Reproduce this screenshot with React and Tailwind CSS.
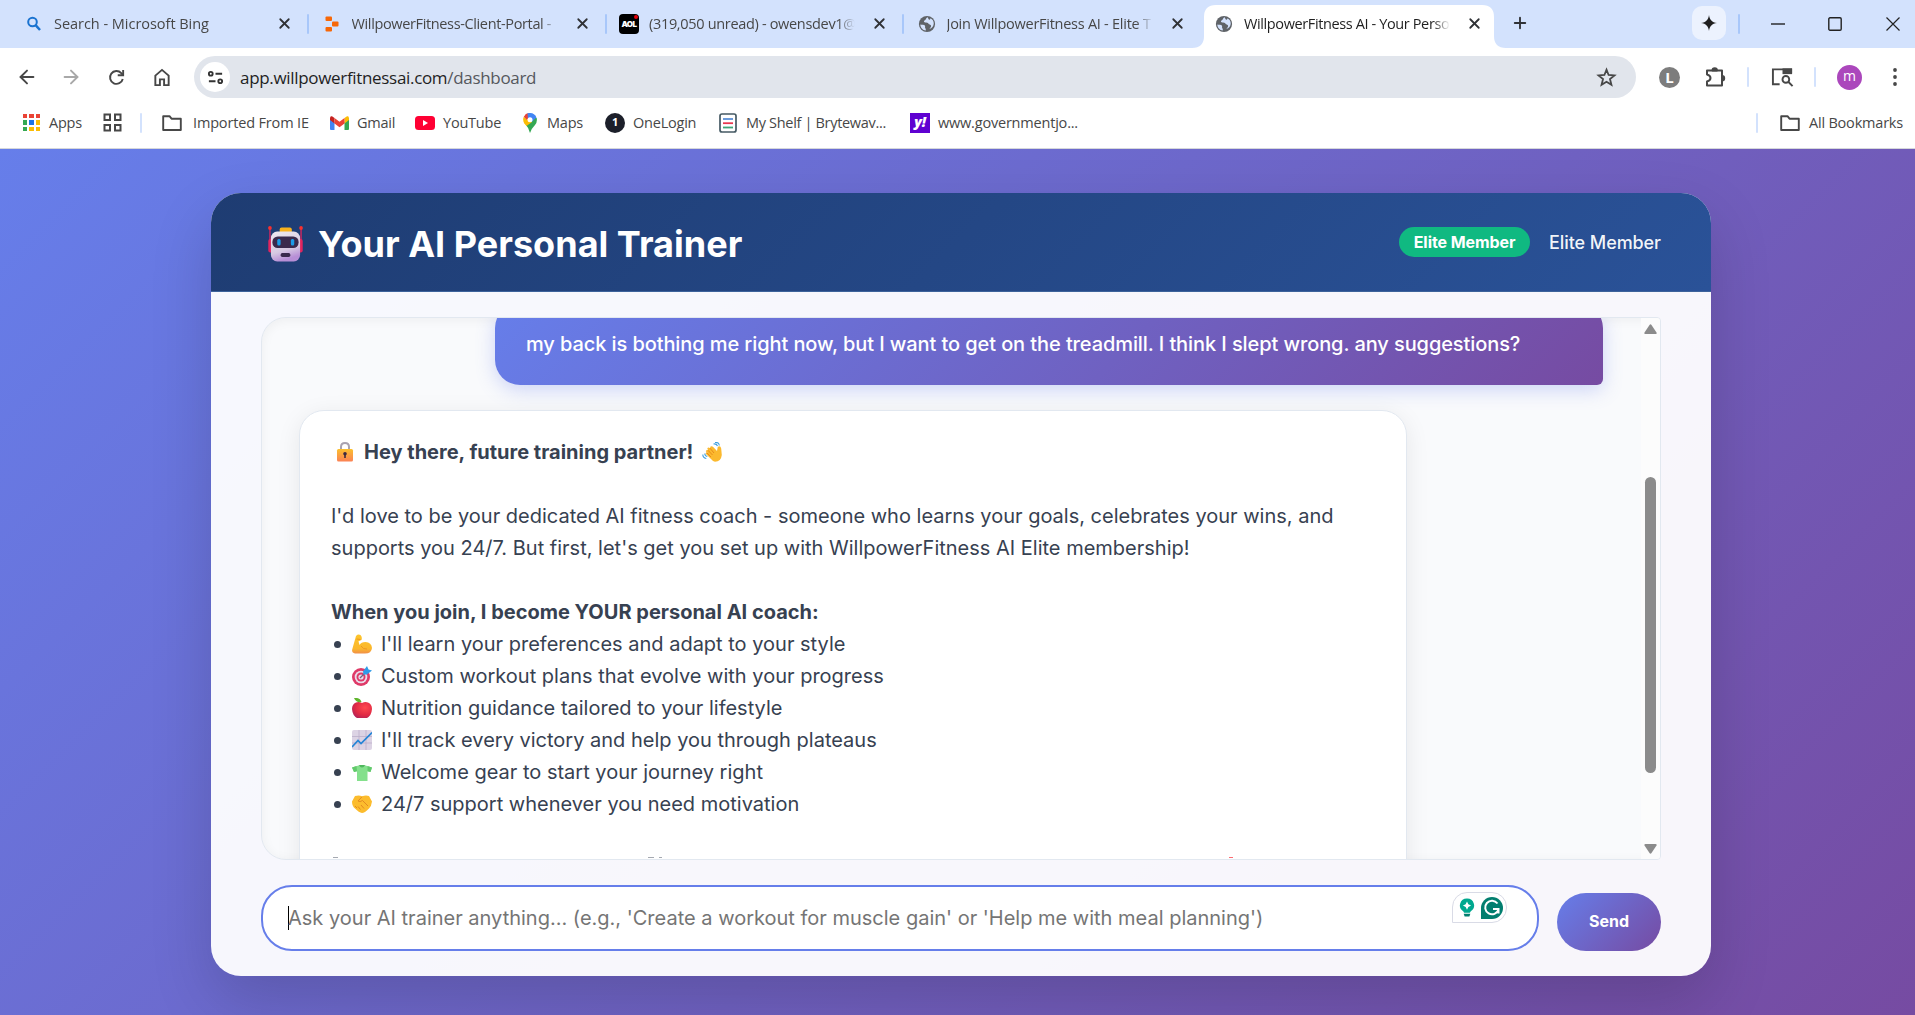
import React from "react";
import { ArrowLeft, ArrowRight, X, Plus } from "lucide-react";

const UI = "font-['Open_Sans',sans-serif]";

function Globe() {
  return (
    <svg viewBox="0 0 20 20" className="h-[18px] w-[18px] shrink-0">
      <circle cx="10" cy="10" r="9" fill="#5f6368" />
      <path d="M10.5 2.6c-2 1-1.2 2.6-2.8 3.2-1.500.6-1.600 2 .2 2.500 1.600.3 3.200-.2 3.800 1.300.4 1.300 2.500.6 2.800 2 .3 1.500-.8 2.700-2 4 3-1 5-3.300 5-6.200 0-2.600-1.400-4.600-3.600-5.700-.1 1.300-1 1.800-1.800 1.200-.8-.5-.6-1.500-1.600-2.300z" fill="#d3e2fd" />
      <path d="M2.600 10.500c1.700.3 4.200.2 5 1.300.8 1.200-.3 2 .7 3.200.7.800.2 1.700.4 2.300-3.500-.6-6-3.300-6.100-6.800z" fill="#d3e2fd" />
    </svg>
  );
}

function BingIcon() {
  return (
    <svg viewBox="0 0 16 16" className="h-4 w-4 shrink-0" fill="none" stroke="#1a73d0" strokeWidth="2">
      <circle cx="6.500" cy="6" r="4.300" />
      <path d="M9.600 9.200 14 14" strokeWidth="2.500" />
    </svg>
  );
}

function ReplitIcon() {
  return (
    <svg viewBox="0 0 14 16" className="h-4 w-[14px] shrink-0" fill="#f76707">
      <rect x="0.500" y="0.500" width="6.500" height="4.500" rx="1" />
      <rect x="7" y="5.500" width="6.500" height="5" rx="1" />
      <rect x="0.500" y="11" width="6.500" height="4.500" rx="1" />
    </svg>
  );
}

function AolIcon() {
  return (
    <span className="relative flex h-5 w-5 shrink-0 items-center justify-center rounded bg-black font-['Inter',sans-serif] text-[8px] font-black tracking-[-0.5px] text-white">
      AOL
      <span className="absolute right-px top-px h-1 w-1 rounded-full bg-red-600" />
    </span>
  );
}

function Tab({ icon, title, titleClass, active, sep }) {
  return (
    <div className={"relative flex h-[43px] w-[297.5px] shrink-0 items-center pb-[6px] " + (active ? "text-[#1f1f1f]" : "text-[#474747]")}>
      {active && (
        <svg viewBox="0 0 315 43" className="absolute -left-[12px] top-0 h-[43px] w-[315px]">
          <path d="M0 43 Q12 43 12 31 V12 Q12 0 24 0 H290 Q302 0 302 12 V31 Q302 43 314 43 Z" fill="#fff" />
        </svg>
      )}
      <div className="relative flex w-10 shrink-0 items-center justify-center">{icon}</div>
      <div className={"relative w-[210px] overflow-hidden whitespace-nowrap leading-5 [mask-image:linear-gradient(to_right,black_90%,transparent_98%)] " + UI + " " + titleClass}>{title}</div>
      <X className="relative ml-[12px] h-[17px] w-[17px] shrink-0 text-[#303236]" strokeWidth={2.500} />
      {sep && <Sep className="relative ml-[14px]" />}
    </div>
  );
}

const Sep = ({ className = "bg-[#a8c7fa]" }) => <span className={"h-5 w-[2px] shrink-0 rounded " + (className.includes("bg-") ? "" : "bg-[#a8c7fa] ") + className} />;

function Folder() {
  return (
    <svg viewBox="0 0 20 18" className="h-[18px] w-5 shrink-0" fill="none" stroke="#474747" strokeWidth="1.900" strokeLinejoin="round">
      <path d="M1.200 2.200H7.500L9.500 4.700H18.800V16H1.200Z" />
    </svg>
  );
}

function AppsIcon() {
  const c = ["#ea4335", "#ea4335", "#ea4335", "#34a853", "#1a73e8", "#fbbc04", "#34a853", "#fbbc04", "#fbbc04"];
  return (
    <div className="grid h-[17px] w-[17px] shrink-0 grid-cols-3 gap-[2px]">
      {c.map((v, i) => (
        <span key={i} style={{ backgroundColor: v }} />
      ))}
    </div>
  );
}

function TabStrip() {
  return (
    <div className="flex h-12 w-full items-start bg-[#d3e2fd] pt-[5px]">
      <div className="flex w-[1204px] shrink-0 pl-[14px]">
        <Tab sep icon={<BingIcon />} title="Search - Microsoft Bing" titleClass="text-[14.500px] tracking-[-0.030px]" />
        <Tab sep icon={<ReplitIcon />} title="WillpowerFitness-Client-Portal -" titleClass="text-[14.500px] tracking-[-0.360px]" />
        <Tab sep icon={<AolIcon />} title="(319,050 unread) - owensdev1@" titleClass="text-[14.500px] tracking-[-0.320px]" />
        <Tab icon={<Globe />} title="Join WillpowerFitness AI - Elite T" titleClass="text-[14.500px] tracking-[-0.260px]" />
      </div>
      <div className="w-[290px] shrink-0">
        <Tab active icon={<Globe />} title="WillpowerFitness AI - Your Perso" titleClass="text-[14.500px] tracking-[-0.380px]" />
      </div>
      <div className="flex h-[38px] flex-1 items-center">
        <Plus className="ml-[17px] h-[18px] w-[18px] -translate-y-px text-[#303236]" strokeWidth={2.500} />
        <div className="-mt-[2px] ml-auto flex h-[34px] w-[34px] items-center justify-center rounded-[10px] bg-[#ecf2fe]">
          <svg viewBox="0 0 16 16" className="h-[16px] w-[16px]" fill="#1f1f1f">
            <path d="M8 0C8.700 5 11 7.300 16 8 11 8.700 8.700 11 8 16 7.300 11 5 8.700 0 8 5 7.300 7.300 5 8 0Z" />
          </svg>
        </div>
        <Sep className="ml-3" />
        <svg viewBox="0 0 14 14" className="ml-[31px] h-[14px] w-[14px]" stroke="#111" strokeWidth="1.300"><path d="M0 7H14" /></svg>
        <svg viewBox="0 0 14 14" className="ml-[43px] h-[14px] w-[14px]" fill="none" stroke="#222" strokeWidth="1.400"><rect x=".8" y=".8" width="12.400" height="12.400" rx="1.200" /></svg>
        <svg viewBox="0 0 14 14" className="ml-[44px] mr-[15px] h-[14px] w-[14px]" stroke="#222" strokeWidth="1.200"><path d="M.5 .5 13.500 13.500M13.500 .5 .5 13.500" /></svg>
      </div>
    </div>
  );
}

function Toolbar() {
  return (
    <div className="flex h-14 items-center bg-white pt-[2px] text-[#474747]">
      <div className="flex w-[194px] shrink-0 items-center pl-4">
        <ArrowLeft className="h-[22px] w-[22px]" strokeWidth={2.100} />
        <ArrowRight className="ml-[22px] h-[22px] w-[22px] text-[#a8a8a8]" strokeWidth={2.100} />
        <svg viewBox="0 0 20 20" className="ml-[25px] h-[19px] w-[19px]" fill="none" stroke="#474747" strokeWidth="2">
          <path d="M16.600 11.500A6.800 6.800 0 1 1 15 5.300L16.500 7" />
          <path d="M17 2V7.700H11.300" />
        </svg>
        <svg viewBox="0 0 18 20" className="ml-[27px] h-[19px] w-[18px]" fill="none" stroke="#474747" strokeWidth="2">
          <path d="M2 8 9 2 16 8V18H11.200V12H6.800V18H2Z" />
        </svg>
      </div>
      <div className="flex h-[42px] w-[1442px] shrink-0 items-center rounded-full bg-[#e1e5ec] pl-[6px] pr-[19px]">
        <span className="flex h-[30px] w-[30px] items-center justify-center rounded-full bg-white">
          <svg viewBox="0 0 18 18" className="h-[17px] w-[17px]" fill="none" stroke="#333" strokeWidth="2">
            <circle cx="4" cy="5" r="2" /><path d="M9 5H16M2 13H9" /><circle cx="14" cy="13" r="2" />
          </svg>
        </span>
        <span className={"ml-[10px] pt-px text-[17px] tracking-[-0.320px] text-[#1f1f1f] " + UI}>
          app.willpowerfitnessai.com<span className="text-[#55585d]">/dashboard</span>
        </span>
        <svg viewBox="0 0 20 20" className="ml-auto h-[21px] w-[21px]" fill="none" stroke="#474747" strokeWidth="1.700">
          <path d="M10 2.500 12 7.600 17.600 8 13.300 11.500 14.700 17 10 14 5.300 17 6.700 11.500 2.400 8 8 7.600Z" />
        </svg>
      </div>
      <div className="flex flex-1 items-center">
        <span className={"ml-[23px] flex h-[21px] w-[21px] items-center justify-center rounded-full bg-[#7d7d7d] text-[15px] font-bold leading-none text-white " + UI}>L</span>
        <svg viewBox="0 0 22 22" className="ml-[25px] h-[22px] w-[22px]" fill="none" stroke="#474747" strokeWidth="2" strokeLinejoin="round">
          <path d="M2 4.500H17V19.500H2V15.500Q5.500 14.500 5.500 12T2 8.500Z" />
          <path d="M7.500 4.500a2.200 2.200 0 0 1 4.400 0ZM17 10a2.200 2.200 0 0 1 0 4.400Z" fill="#474747" />
        </svg>
        <Sep className="ml-[20px] bg-[#d3e2fd]" />
        <svg viewBox="0 0 24 20" className="ml-[22px] h-[20px] w-[23px]" fill="none" stroke="#474747" strokeWidth="2">
          <path d="M9 17.500H2V2H21V6" /><path d="M12 1H22V7H12Z" fill="#474747" stroke="none" />
          <circle cx="15.500" cy="12.500" r="3.500" /><path d="M18 15 22.500 19.500" />
        </svg>
        <Sep className="ml-[20px] bg-[#d3e2fd]" />
        <span className={"ml-[21px] flex h-[25px] w-[25px] items-center justify-center rounded-full bg-[#ab47bc] pb-[2px] text-[14px] leading-none text-white " + UI}>m</span>
        <svg viewBox="0 0 4 18" className="ml-[31px] h-[18px] w-[4px]" fill="#474747">
          <circle cx="2" cy="2" r="1.900" /><circle cx="2" cy="9" r="1.900" /><circle cx="2" cy="16" r="1.900" />
        </svg>
      </div>
    </div>
  );
}

function Mark({ icon, label, w, gap, track = "" }) {
  return (
    <div className={"flex shrink-0 items-center " + w}>
      {icon}
      <span className={"whitespace-nowrap " + gap + " " + track}>{label}</span>
    </div>
  );
}

function Bookmarks() {
  return (
    <div className={"flex h-[45px] items-center border-b border-[#d5d7db] bg-white pb-[7px] pl-[23px] pr-3 text-[14.500px] tracking-[-0.220px] text-[#474747] " + UI}>
      <Mark icon={<AppsIcon />} label="Apps" w="w-[80px]" gap="ml-[9px]" />
      <svg viewBox="0 0 19 19" className="h-[19px] w-[19px] shrink-0" fill="none" stroke="#474747" strokeWidth="2">
        <rect x="1.500" y="1.500" width="5.500" height="5.500" /><rect x="12" y="1.500" width="5.500" height="5.500" />
        <rect x="1.500" y="12" width="5.500" height="5.500" /><rect x="12" y="12" width="5.500" height="5.500" />
      </svg>
      <Sep className="ml-[18px] mr-[20px] bg-[#d3e2fd]" />
      <Mark icon={<Folder />} label="Imported From IE" w="w-[168px]" gap="ml-[11px]" track="tracking-[-0.160px]" />
      <Mark
        icon={
          <svg viewBox="0 0 19 14" className="h-[14px] w-[19px] shrink-0">
            <path d="M0 2V13Q0 14 1 14H4.500V6Z" fill="#4285f4" /><path d="M19 2V13Q19 14 18 14H14.500V6Z" fill="#34a853" />
            <path d="M14.500 2 17 .3Q19-.3 19 2.500V4L14.500 7.500Z" fill="#fbbc04" /><path d="M4.500 2 2 .3Q0-.3 0 2.500V4L4.500 7.500Z" fill="#c5221f" />
            <path d="M4.500 2 9.500 5.800 14.500 2V7.500L9.500 11.300 4.500 7.500Z" fill="#ea4335" />
          </svg>
        }
        label="Gmail" w="w-[85px]" gap="ml-[8px]"
      />
      <Mark
        icon={<svg viewBox="0 0 20 14" className="h-[14px] w-5 shrink-0"><rect width="20" height="14" rx="3.500" fill="#f03" /><path d="M8 4V10L13 7Z" fill="#fff" /></svg>}
        label="YouTube" w="w-[108px]" gap="ml-[8px]"
      />
      <Mark
        icon={
          <svg viewBox="0 0 14 20" className="h-5 w-[14px] shrink-0">
            <path d="M7 20Q6 15 2.500 11.500L10 4 13.700 5Q14.500 9 12 12 8 16 7 20Z" fill="#34a853" />
            <path d="M1.500 10.500Q-.8 7 .8 3.700L5 7.500Z" fill="#fbbc04" /><path d="M1 10 6 5 9 9 3.500 13Z" fill="#fbbc04" />
            <path d="M.8 3.700Q2.500.5 5.500.1L6.500 4 4 7Z" fill="#ea4335" /><path d="M4.500.2Q11-1 13.500 4.500L8.500 9 5 6Z" fill="#4285f4" />
            <circle cx="7" cy="6.800" r="2.500" fill="#fff" />
          </svg>
        }
        label="Maps" w="w-[82px]" gap="ml-[10px]"
      />
      <Mark icon={<span className="flex h-5 w-5 shrink-0 items-center justify-center rounded-full bg-[#1c1f2a] text-[11px] font-bold text-white">1</span>} label="OneLogin" w="w-[114px]" gap="ml-[8px]" />
      <Mark
        icon={
          <svg viewBox="0 0 18 20" className="h-5 w-[18px] shrink-0" fill="none">
            <rect x="1" y="1" width="16" height="18" rx="2" fill="#fff" stroke="#455a64" strokeWidth="1.700" />
            <path d="M4 6H14" stroke="#5b8fd6" strokeWidth="1.800" /><path d="M4 10.200H14" stroke="#e8384f" strokeWidth="1.800" /><path d="M4 14.500H14" stroke="#3fa578" strokeWidth="1.800" />
          </svg>
        }
        label="My Shelf | Brytewav..." w="w-[191px]" gap="ml-[9px]" track="tracking-[-0.320px]"
      />
      <Mark icon={<span className="flex h-5 w-5 shrink-0 items-center justify-center bg-[#5f01d1] pb-[3px] text-[14px] font-extrabold italic text-white">y!</span>} label="www.governmentjo..." w="w-[180px]" gap="ml-[8px]" track="tracking-[-0.200px]" />
      <Sep className="ml-auto mr-[22px] bg-[#d3e2fd]" />
      <Mark icon={<Folder />} label="All Bookmarks" w="" gap="ml-[9px]" track="tracking-[-0.200px]" />
    </div>
  );
}

function Robot() {
  return (
    <svg viewBox="0 0 36 36" className="ml-px mt-[3px] h-9 w-[35px] shrink-0" preserveAspectRatio="none">
      <defs>
        <linearGradient id="rb" x1="0" y1="0" x2="0.300" y2="1"><stop offset="0" stopColor="#efe9f0" /><stop offset=".7" stopColor="#d6c9e2" /><stop offset="1" stopColor="#b78ed6" /></linearGradient>
      </defs>
      <path d="M2 3V14M34 3V14" stroke="#e0245e" strokeWidth="1.300" />
      <circle cx="2" cy="2" r="1.900" fill="#f8312f" /><circle cx="34" cy="2" r="1.900" fill="#f8312f" />
      <rect x="0.300" y="13" width="5" height="13.500" rx="2" fill="#e0245e" /><rect x="30.700" y="13" width="5" height="13.500" rx="2" fill="#e0245e" />
      <rect x="12" y="1.500" width="12.500" height="6" rx="2" fill="#f9b21c" />
      <rect x="3" y="5.500" width="30" height="30" rx="6.500" fill="url(#rb)" />
      <rect x="4.500" y="10.500" width="27" height="11.500" rx="5.500" fill="#3a2a4d" />
      <rect x="9.500" y="13" width="3.500" height="6.500" rx="1.500" fill="#1c9be8" /><rect x="23.500" y="13" width="3.500" height="6.500" rx="1.500" fill="#1c9be8" />
      <rect x="13" y="27" width="10" height="4" rx="1.800" fill="#3a2a4d" />
    </svg>
  );
}

const E = "h-5 w-5 shrink-0";
const Lock = () => (
  <svg viewBox="0 0 20 20" className={E}>
    <defs><linearGradient id="lk" x1="0" y1="0" x2="0" y2="1"><stop offset="0" stopColor="#fbc02d" /><stop offset="1" stopColor="#fb8154" /></linearGradient></defs>
    <path d="M6 8V5Q6 1 10 1T14 5V8" fill="none" stroke="#a9a3b0" strokeWidth="2" />
    <rect x="2" y="7" width="16" height="12.500" rx="1.500" fill="url(#lk)" /><circle cx="10" cy="11.800" r="1.800" fill="#3d2a3f" /><path d="M9.200 12h1.600v4H9.200z" fill="#3d2a3f" />
  </svg>
);
const Wave = () => (
  <svg viewBox="0 0 20 20" className={E}>
    <path d="M6 11.500 3.800 9.200Q4.500 7.500 6 8.300L5.300 6.200Q6.500 4.600 8 6.200L8.500 4.600Q10 3.600 11.200 5L15 9 15.800 4.800Q18.500 3.200 19.200 6.500L19.800 13Q19 19.800 13 19.800 11 19.500 9 17L3.500 11.500Q4 10 6 11.500Z" fill="#fbb92e" />
    <path d="M6 8.300 10.500 13M8 6.200 12 11M4.500 10.500 9 15" stroke="#e88b1c" strokeWidth="1" fill="none" />
    <path d="M11.500 2Q14.500 1.500 15.500 4M13 .5Q17 0 17.300 3.500M.8 12.500Q.8 16 4.300 16.500M2.800 11.500Q2.800 14 5.300 14.500" fill="none" stroke="#3f9fe0" strokeWidth="1.100" />
  </svg>
);
const Biceps = () => (
  <svg viewBox="0 0 20 20" className={E}>
    <defs><linearGradient id="bc" x1="0" y1="0" x2="0" y2="1"><stop offset="0" stopColor="#fdc52c" /><stop offset=".75" stopColor="#fbb72b" /><stop offset="1" stopColor="#f08f4a" /></linearGradient></defs>
    <path d="M4 2Q6-.2 8.500 1 10.500 3 9.500 6L6.500 7.200 7.500 11Q9 8 13.500 8 19.500 8.500 20 14 19.500 19.500 13 19.500H3Q-.5 19 .2 15.500Z" fill="url(#bc)" />
    <path d="M4.500 5 8.500 5.500M9 12Q11 15.500 15 15" fill="none" stroke="#ec9420" strokeWidth=".9" />
  </svg>
);
const Target = () => (
  <svg viewBox="0 0 20 20" className={E}>
    <circle cx="9" cy="11" r="9" fill="#df3a68" /><circle cx="9" cy="11" r="6.300" fill="#e9dcea" /><circle cx="9" cy="11" r="4.500" fill="#df3a68" /><circle cx="9" cy="11" r="2.600" fill="#e9dcea" />
    <path d="M8 12 14 6" stroke="#75617e" strokeWidth="1.300" /><path d="M11.500 8.500 11 5.500 15 0 16.500 3.500 20 4.500 15 8.500Z" fill="#2f9be8" />
  </svg>
);
const Apple = () => (
  <svg viewBox="0 0 20 20" className={E}>
    <defs><radialGradient id="ap" cx=".65" cy=".35" r=".8"><stop offset="0" stopColor="#ff4a4f" /><stop offset=".6" stopColor="#e02a44" /><stop offset="1" stopColor="#a9215c" /></radialGradient></defs>
    <path d="M10 5Q13 3.500 16 4.500 20 6 20 11 19.500 17.500 15 20H5Q.5 17.500 0 11 0 6 4 4.500 7 3.500 10 5Z" fill="url(#ap)" />
    <path d="M2 0Q8-.8 9.500 4 4 5 2 0Z" fill="#5fb52c" />
  </svg>
);
const Chart = () => (
  <svg viewBox="0 0 20 20" className={E}>
    <rect width="20" height="20" rx="2" fill="#dcd3e4" /><path d="M0 6.500H20M0 13H20M7 0V20M14 0V20" stroke="#bbaec9" strokeWidth=".8" />
    <path d="M0 17 6 10.500 9 13.500 20 2.500" fill="none" stroke="#2585d6" strokeWidth="1.700" />
  </svg>
);
const Shirt = () => (
  <svg viewBox="0 0 20 20" className={E}>
    <path d="M6.500 3.500 0 5.500 2 10 5 9.300V19H15.500V9.300L18.500 10 20 5.500 13.500 3.500Q10 6.500 6.500 3.500Z" fill="#84e08c" />
    <path d="M6.500 3.500Q10 7.500 13.500 3.500L12 3H8Z" fill="#4fb85d" /><path d="M0 5.500 4.500 4 5 9.300 2 10ZM20 5.500 15.500 4V9.300L18.500 10Z" fill="#62c96c" />
  </svg>
);
const Hands = () => (
  <svg viewBox="0 0 20 20" className={E}>
    <path d="M3 2Q7 .8 10 2.200 14 .8 17 2L20 7.500Q19.500 12 17 14.500 12.500 19 10 19 7 18.500 3 14.500 0 12 0 7.500Z" fill="#fcbc2d" />
    <path d="M10 2.800 6 7Q8 8.500 10.500 6.500L16 12M6 12.500 8.500 15.500M9 11 12 14.500M3 12 5 14" fill="none" stroke="#df8420" strokeWidth=".9" />
  </svg>
);

const BULLETS = [
  [Biceps, "I'll learn your preferences and adapt to your style"],
  [Target, "Custom workout plans that evolve with your progress"],
  [Apple, "Nutrition guidance tailored to your lifestyle"],
  [Chart, "I'll track every victory and help you through plateaus"],
  [Shirt, "Welcome gear to start your journey right"],
  [Hands, "24/7 support whenever you need motivation"],
];

function Chat() {
  return (
    <div className="flex h-[543px] overflow-hidden rounded-l-[25px] rounded-r-[4px] border border-[#e2e8f0] bg-[#f9fafc] shadow-[inset_0_2px_12px_rgba(0,0,0,0.05)]">
      <div className="flex h-[541px] w-[1379px] shrink-0 flex-col overflow-hidden pl-[37px] pr-[38px]">
        <div className="-mt-[15px] flex h-[82px] w-[1108px] shrink-0 items-center self-end whitespace-nowrap rounded-[25px] rounded-br-[6px] bg-[linear-gradient(135deg,#667eea_0%,#764ba2_100%)] px-[31px] text-[20px] font-medium leading-8 tracking-[-0.090px] text-white shadow-[0_5px_19px_rgba(102,126,234,0.3)]">
          my back is bothing me right now, but I want to get on the treadmill. I think I slept wrong. any suggestions?
        </div>
        <div className="mt-[25px] h-[600px] w-[1108px] shrink-0 rounded-[25px] border border-[#e2e8f0] bg-white px-[31px] pt-[25px] text-[20px] leading-8 text-[#374151] shadow-[0_5px_25px_rgba(0,0,0,0.08)]">
          <div className="flex h-8 items-center pl-[4px] font-bold">
            <Lock /><span className="ml-[9px] mr-[9px]">Hey there, future training partner!</span><Wave />
          </div>
          <p className="mt-8 w-[1044px]">
            I'd love to be your dedicated AI fitness coach - someone who learns your goals, celebrates your wins, and<br />
            supports you 24/7. But first, let's get you set up with WillpowerFitness AI Elite membership!
          </p>
          <p className="mt-8 font-bold">When you join, I become YOUR personal AI coach:</p>
          {BULLETS.map(([Icon, text]) => (
            <div key={text} className="flex h-8 items-center">
              <span className="flex w-[21px] shrink-0 pl-[3px]"><span className="h-[7px] w-[7px] rounded-full bg-[#374151]" /></span>
              <Icon />
              <span className="ml-[9px]">{text}</span>
            </div>
          ))}
          <div className="mt-[37px] flex pl-[2px]">
            <span className="h-px w-[5px] shrink-0 bg-[#374151]/45" />
            <span className="ml-[310px] h-px w-[6px] shrink-0 bg-[#374151]/45" />
            <span className="ml-[5px] h-px w-[3px] shrink-0 bg-[#374151]/45" />
            <span className="ml-[567px] h-px w-[4px] shrink-0 bg-red-500/70" />
          </div>
        </div>
      </div>
      <div className="flex w-[19px] shrink-0 flex-col items-center bg-[#fcfcfc]">
        <svg viewBox="0 0 13 10" className="mt-[6px] h-[10px] w-[13px]" fill="#8b8b8b"><path d="M1.500 10Q0 10 .5 8.500L5.500 1Q6.500-.4 7.500 1L12.500 8.500Q13 10 11.500 10Z" /></svg>
        <div className="mt-[143px] h-[296px] w-[11px] rounded-full bg-[#8b8b8b]" />
        <svg viewBox="0 0 13 10" className="mt-[71px] h-[10px] w-[13px]" fill="#8b8b8b"><path d="M1.500 0Q0 0 .5 1.500L5.500 9Q6.500 10.400 7.500 9L12.500 1.500Q13 0 11.500 0Z" /></svg>
      </div>
    </div>
  );
}

export default function App() {
  return (
    <div className="h-[1015px] w-[1915px] overflow-hidden font-['Inter',sans-serif]">
      <TabStrip />
      <Toolbar />
      <Bookmarks />
      <div className="h-[866px] bg-[linear-gradient(135deg,#667eea_0%,#764ba2_100%)] pl-[211px] pt-[44px]">
        <main className="h-[783px] w-[1500px] overflow-hidden rounded-[30px] bg-white/95 shadow-[0_25px_62px_rgba(0,0,0,0.16)]">
          <header className="flex h-[99px] items-center border-b border-[#3d639b] bg-[linear-gradient(135deg,#1e3c72_0%,#2a5298_100%)] pl-[56px] pr-[50px] text-white">
            <Robot />
            <h1 className="ml-[15px] pt-[4px] text-[36px] font-bold leading-none tracking-[0.020px]">Your AI Personal Trainer</h1>
            <span className="ml-auto flex h-[30px] w-[131px] items-center justify-center rounded-full bg-[#10b981] text-[16px] font-bold tracking-[-0.080px]">Elite Member</span>
            <span className="ml-[19px] text-[18px] font-medium tracking-[-0.080px] text-white/95">Elite Member</span>
          </header>
          <div className="px-[50px] pt-[25px]">
            <Chat />
            <div className="mt-[25px] flex items-end">
              <div className="relative flex h-[66px] w-[1278px] items-center rounded-[31px] border-2 border-[#667eea] bg-white pl-[25px] text-[20px] text-[#757575]">
                <span className="h-6 w-px bg-black" />
                <span className="-ml-px whitespace-nowrap">Ask your AI trainer anything... (e.g., 'Create a workout for muscle gain' or 'Help me with meal planning')</span>
                <div className="absolute right-[30px] top-[5px] flex h-[31px] w-[55px] items-center gap-[6px] rounded-[15px] rounded-bl-none border border-[#d9dbe6] bg-white pl-[6px]">
                  <svg viewBox="0 0 16 20" className="h-[19px] w-[16px]">
                    <path d="M8 .5A7.300 7.300 0 0 0 4 14L5 15.500H11L12 14A7.300 7.300 0 0 0 8 .5Z" fill="#00a88f" />
                    <path d="M8 3.700 9.400 6.600 12.300 8 9.400 9.400 8 12.300 6.600 9.400 3.700 8 6.600 6.600Z" fill="#fff" /><path d="M4.500 16.700H11.500L10.500 19.500H5.500Z" fill="#027e6f" />
                  </svg>
                  <svg viewBox="0 0 22 22" className="h-[22px] w-[22px]">
                    <path d="M11 0A11 11 0 1 1 11 22H0V11A11 11 0 0 1 11 0Z" fill="#027e6f" />
                    <path d="M16.500 6.500A6.800 6.800 0 1 0 17.500 12.500M12 12H17.500V16.500" fill="none" stroke="#fff" strokeWidth="2" />
                  </svg>
                </div>
              </div>
              <button className="ml-[18px] flex h-[58px] w-[104px] items-center justify-center rounded-[29px] bg-[linear-gradient(135deg,#667eea_0%,#764ba2_100%)] pb-[2px] text-[16px] font-bold text-white">Send</button>
            </div>
          </div>
        </main>
      </div>
    </div>
  );
}
